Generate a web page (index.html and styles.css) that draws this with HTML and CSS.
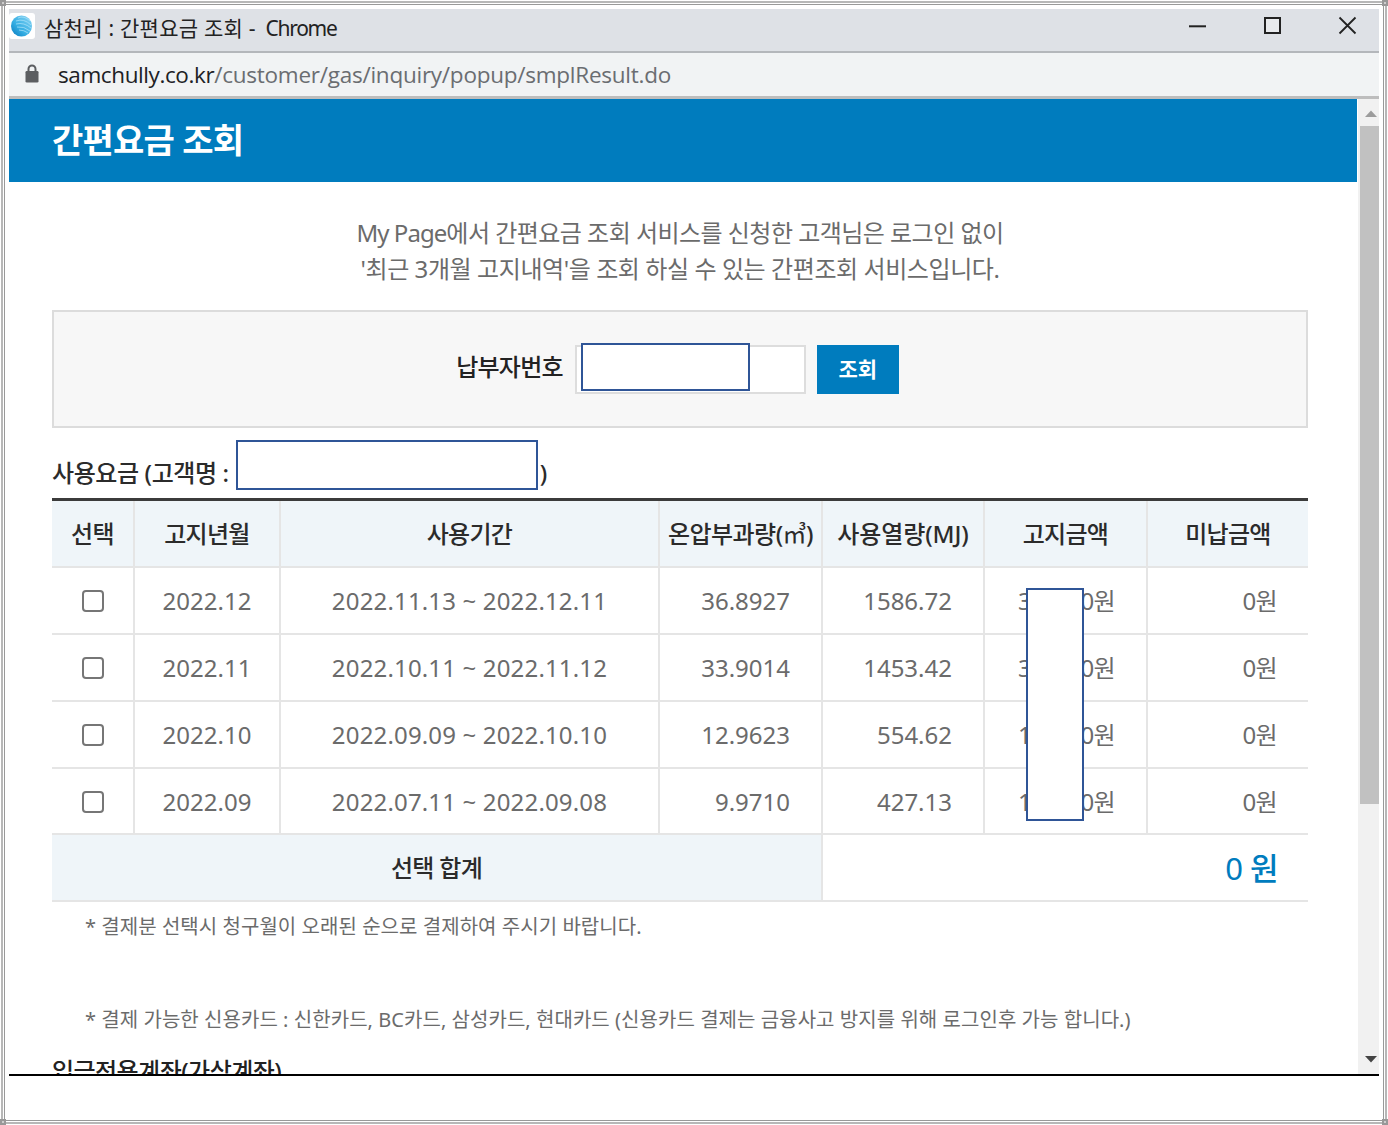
FILE: index.html
```html
<!DOCTYPE html>
<html lang="ko">
<head>
<meta charset="utf-8">
<title>삼천리 : 간편요금 조회</title>
<link rel="stylesheet" href="styles.css">
</head>
<body>
<div class="frame">
  <i class="handle tl"></i><i class="handle tr"></i><i class="handle bl"></i><i class="handle br"></i>
  <div class="frame-inner">
    <div class="window">
      <header class="titlebar">
        <span class="favicon"><svg width="26" height="26" viewBox="0 0 26 26"><defs><linearGradient id="g" x1="0" y1="1" x2="1" y2="0"><stop offset="0" stop-color="#0879bd"/><stop offset=".4" stop-color="#35aee3"/><stop offset="1" stop-color="#8bd6f5"/></linearGradient></defs><circle cx="12.5" cy="13" r="10.5" fill="url(#g)"/><path d="M9 5q6-3 12 3M7 8q8-3 15 4M7 11q8-2 15 4M8 14q7-1 13 4M10 17q5 0 9 3" fill="none" stroke="#a5dff8" stroke-width=".8"/></svg></span>
        <h1 class="window-title">삼천리 : 간편요금 조회 - <span class="app">Chrome</span></h1>
        <svg class="controls" width="170" height="22" viewBox="0 0 170 22"><path d="M0 12.300h17" stroke="#222" stroke-width="2"/><rect x="76" y="4" width="15" height="15" fill="#e8eaed" stroke="#222" stroke-width="2"/><path d="M150.500 3.500l16 16M166.500 3.500l-16 16" stroke="#222" stroke-width="1.800"/></svg>
      </header>
      <div class="address">
        <svg class="lock" width="14" height="20" viewBox="0 0 14 20"><path d="M3.500 8V5a3.500 3.500 0 0 1 7 0v3" fill="none" stroke="#5c5e61" stroke-width="2"/><rect x=".5" y="7" width="13" height="11.500" rx="1.300" fill="#5c5e61"/></svg>
        <span class="url"><b>samchully.co.kr</b>/customer/gas/inquiry/popup/smplResult.do</span>
      </div>
      <div class="viewport">
        <main class="page">
          <h2 class="banner">간편요금 조회</h2>
          <p class="intro"><span class="l1"><span class="latin">My Page</span>에서 간편요금 조회 서비스를 신청한 고객님은 로그인 없이</span><br><span class="l2">'최근 3개월 고지내역'을 조회 하실 수 있는 간편조회 서비스입니다.</span></p>
          <form class="search">
            <label class="search-label">납부자번호</label>
            <div class="field"><i class="mask mask-number"></i></div>
            <button class="submit" type="button">조회</button>
          </form>
          <h3 class="section"><span>사용요금 (고객명 :</span><i class="mask mask-name"></i><span class="paren">)</span></h3>
          <div class="table-wrap">
          <table class="bills">
            <colgroup><col class="c1"><col class="c2"><col class="c3"><col class="c4"><col class="c5"><col class="c6"><col class="c7"></colgroup>
            <thead><tr><th>선택</th><th>고지년월</th><th>사용기간</th><th class="volume">온압부과량(<span class="unit">㎥</span>)</th><th class="heat">사용열량(MJ)</th><th>고지금액</th><th>미납금액</th></tr></thead>
            <tbody>
              <tr><td><i class="check"></i></td><td>2022.12</td><td class="period">2022.11.13 ~ 2022.12.11</td><td class="num">36.8927</td><td class="num">1586.72</td><td class="num won"><span class="amount"><span>3</span><span>0원</span></span></td><td class="num won">0원</td></tr>
              <tr><td><i class="check"></i></td><td>2022.11</td><td class="period">2022.10.11 ~ 2022.11.12</td><td class="num">33.9014</td><td class="num">1453.42</td><td class="num won"><span class="amount"><span>3</span><span>0원</span></span></td><td class="num won">0원</td></tr>
              <tr><td><i class="check"></i></td><td>2022.10</td><td class="period">2022.09.09 ~ 2022.10.10</td><td class="num">12.9623</td><td class="num">554.62</td><td class="num won"><span class="amount"><span>1</span><span>0원</span></span></td><td class="num won">0원</td></tr>
              <tr class="short"><td><i class="check"></i></td><td>2022.09</td><td class="period">2022.07.11 ~ 2022.09.08</td><td class="num">9.9710</td><td class="num">427.13</td><td class="num won"><span class="amount"><span>1</span><span>0원</span></span></td><td class="num won">0원</td></tr>
            </tbody>
            <tfoot><tr><th colspan="4">선택 합계</th><td class="total" colspan="3"><span class="zero">0</span> 원</td></tr></tfoot>
          </table>
          <i class="mask mask-amount"></i>
          </div>
          <p class="note n1">* 결제분 선택시 청구월이 오래된 순으로 결제하여 주시기 바랍니다.</p>
          <p class="note n2">* 결제 가능한 신용카드 : 신한카드, BC카드, 삼성카드, 현대카드 (신용카드 결제는 금융사고 방지를 위해 로그인후 가능 합니다.)</p>
          <h3 class="account">입금전용계좌(가상계좌)</h3>
        </main>
        <div class="scrollbar">
          <svg width="12" height="7" viewBox="0 0 12 7"><path d="M0 7L6 .500 12 7z" fill="#9c9c9c"/></svg>
          <div class="thumb"></div>
          <svg class="down" width="12" height="7" viewBox="0 0 12 7"><path d="M0 0L6 6.500 12 0z" fill="#444"/></svg>
        </div>
      </div>
    </div>
  </div>
</div>
</body>
</html>
```
FILE: styles.css
```css
* { box-sizing: border-box; }
body {
  margin: 0;
  padding: 1px;
  height: 1125px;
  overflow: hidden;
  background: #fff;
  color: #6b6b6b;
  font: 24px/36px "Noto Sans", "Noto Sans CJK KR", sans-serif;
}
h1, h2, h3, p { margin: 0; font-size: 24px; font-weight: 500; white-space: nowrap; }

.frame { position: relative; width: 1386px; height: 1123px; border: 2px solid #b7b7b7; padding: 1px; }
.frame-inner { height: 1117px; border: 1px solid #999; padding: 4px 3px 0 4px; }
.handle { position: absolute; width: 6px; height: 6px; border: 2px solid #989898; background: #ccc; }
.tl { left: -3px; top: -3px; }
.tr { right: -3px; top: -3px; }
.bl { left: -3px; bottom: -3px; }
.br { right: -3px; bottom: -3px; }

.window { width: 1370px; height: 1067px; display: flex; flex-direction: column; border-bottom: 2px solid #000; }
.titlebar { height: 44px; display: flex; align-items: center; background: #dee1e6; border-bottom: 2px solid #b4b7bb; padding-right: 20px; }
.favicon { width: 26px; height: 26px; margin-bottom: 8px; background: #fff; border-radius: 3px; line-height: 0; }
.window-title { margin: -5px 0 0 9px; font-size: 21px; font-weight: 400; line-height: 30px; color: #222; letter-spacing: .25px; }
.app { margin-left: 4px; letter-spacing: -1.300px; }
.controls { margin: -10px 0 0 auto; }
.address { height: 46px; display: flex; align-items: center; background: #f1f3f4; border-bottom: 3px solid #bdbdbd; padding-left: 16px; }
.lock { margin-top: -2px; }
.url { margin: 0 0 0 19px; font-family: "Open Sans", sans-serif; font-size: 22.500px; color: #6a6d71; letter-spacing: -.25px; }
.url b { font-weight: 400; color: #202124; letter-spacing: -.4px; }

.viewport { flex: 1; min-height: 0; display: flex; gap: 1px; }
.page { width: 1348px; height: 975px; overflow: hidden; }
.banner { height: 83px; padding: 23px 0 0 43px; background: #007cbe; color: #fff; font-size: 34px; font-weight: 700; line-height: 36px; letter-spacing: -.75px; }
.intro { margin: 33px 0 0; padding-right: 6px; text-align: center; font-weight: 400; letter-spacing: -.53px; }
.latin { letter-spacing: -.95px; }
.l2 { letter-spacing: -.42px; }
.search { width: 1256px; height: 118px; margin: 23px 0 0 43px; border: 2px solid #dcdcdc; background: #f7f7f7; display: flex; justify-content: center; align-items: center; padding-right: 5px; }
.search-label { margin: -4px 12px 0 0; color: #222; font-weight: 500; letter-spacing: -.8px; }
.field { position: relative; width: 231px; height: 49px; border: 2px solid #ddd; background: #fff; }
.submit { width: 82px; height: 49px; margin-left: 11px; padding: 0 0 3px; border: 0; background: #007cbe; color: #fff; font: 700 21px/44px "Noto Sans CJK KR", sans-serif; }
.mask { position: absolute; border: 2px solid #2f5597; background: #fff; }
.mask-number { left: 4px; top: -4px; width: 169px; height: 48px; }
.section { position: relative; height: 70px; margin-left: 43px; padding-top: 27px; color: #2b2b2b; letter-spacing: -.4px; }
.mask-name { left: 184px; top: 12px; width: 302px; height: 50px; }
.paren { margin-left: 311px; }

.table-wrap { position: relative; margin-left: 43px; width: 1256px; }
.bills { width: 1256px; table-layout: fixed; border-collapse: separate; border-spacing: 0; border-top: 3px solid #3b3b3b; }
.c1 { width: 83px; } .c2 { width: 146px; } .c3 { width: 379px; } .c4 { width: 163px; } .c5 { width: 162px; } .c6 { width: 163px; } .c7 { width: 160px; }
.bills th, .bills td { height: 67px; padding: 1px 0 0; border: solid #e5e5e5; border-width: 0 2px 2px 0; text-align: center; vertical-align: middle; line-height: 34px; white-space: nowrap; }
.bills .short td { height: 66px; }
.bills tr > :last-child { border-right: 0; }
.bills th { background: #eff5f9; color: #2b2b2b; font-weight: 500; letter-spacing: -.7px; }
.bills .volume { letter-spacing: -.55px; }
.unit { font-weight: 400; }
.bills .heat { letter-spacing: -.1px; }
.bills .period { letter-spacing: .16px; }
.bills .num { text-align: right; padding-right: 31px; }
.bills .won { letter-spacing: -.7px; }
.amount { display: inline-flex; justify-content: space-between; width: 97px; }
.bills .total { text-align: right; padding-right: 30px; color: #007cbe; font-size: 31px; font-weight: 500; letter-spacing: -.5px; }
.zero { font-weight: 400; }
.check { display: block; width: 22px; height: 22px; margin: 0 auto; border: 2px solid #767676; border-radius: 4px; background: #fff; }
.mask-amount { left: 974px; top: 90px; width: 58px; height: 233px; }

.note { padding-left: 76px; font-size: 20px; font-weight: 400; line-height: 30px; letter-spacing: .05px; }
.n1 { margin-top: 10px; }
.n2 { margin-top: 63px; }
.account { margin: 18px 0 0 43px; color: #222; letter-spacing: -.55px; line-height: 36px; }

.scrollbar { width: 21px; background: #f1f1f1; display: flex; flex-direction: column; align-items: flex-end; padding-top: 11px; }
.scrollbar svg { margin-right: 2px; }
.thumb { width: 19px; height: 678px; margin-top: 9px; background: #c1c1c1; }
.scrollbar .down { margin-top: auto; margin-bottom: 11px; }
```
